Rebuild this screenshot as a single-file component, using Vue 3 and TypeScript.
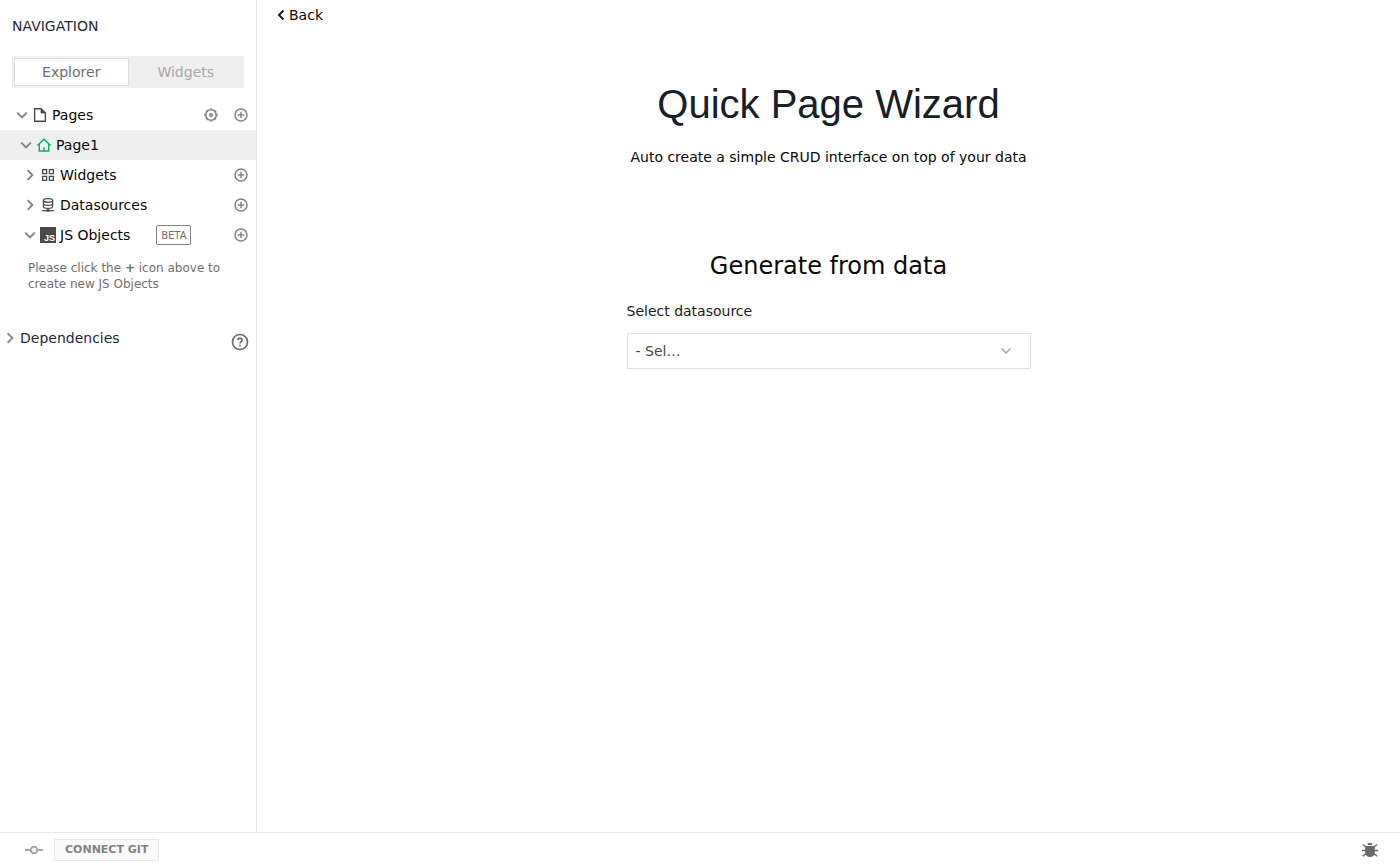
<script setup lang="ts">
import { ref } from 'vue'

type RowKind = 'pages' | 'home' | 'widgets' | 'datasources' | 'js'

interface Row {
  kind: RowKind
  label: string
  level: number
  open: boolean
  active?: boolean
  settings?: boolean
  addable?: boolean
  beta?: boolean
}

const rows: Row[] = [
  { kind: 'pages', label: 'Pages', level: 1, open: true, settings: true, addable: true },
  { kind: 'home', label: 'Page1', level: 2, open: true, active: true },
  { kind: 'widgets', label: 'Widgets', level: 3, open: false, addable: true },
  { kind: 'datasources', label: 'Datasources', level: 3, open: false, addable: true },
  { kind: 'js', label: 'JS Objects', level: 3, open: true, addable: true, beta: true },
]

const tab = ref<'Explorer' | 'Widgets'>('Explorer')
const tabs = ['Explorer', 'Widgets'] as const
const datasource = ref('')
</script>

<template>
  <div class="editor">
    <div class="workspace">
      <aside class="sidebar">
        <h2 class="nav-title">NAVIGATION</h2>
        <div class="tabs" role="tablist">
          <button
            v-for="name in tabs"
            :key="name"
            type="button"
            role="tab"
            class="tab"
            :class="{ selected: tab === name }"
            :aria-selected="tab === name"
            @click="tab = name"
          >{{ name }}</button>
        </div>

        <ul class="tree">
          <li
            v-for="row in rows"
            :key="row.label"
            class="row"
            :class="['level-' + row.level, { active: row.active }]"
          >
            <button type="button" class="toggle" :aria-expanded="row.open">
              <svg class="chevron" viewBox="0 0 16 16" aria-hidden="true">
                <path v-if="row.open" d="M3.2 5.6 8 10.4 12.8 5.6" />
                <path v-else d="M5.6 3.2 10.4 8 5.6 12.8" />
              </svg>
              <svg class="glyph" viewBox="0 0 16 16" aria-hidden="true">
                <template v-if="row.kind === 'pages'">
                  <path d="M2.6 1.8H9L13.4 6V14.2H2.6Z" fill="none" stroke="#4b4848" stroke-width="1.4" />
                  <path d="M9 1.8V6H13.4Z" fill="#4b4848" stroke="#4b4848" stroke-width="0.8" />
                </template>
                <g v-else-if="row.kind === 'home'" fill="none" stroke="#03b365" stroke-width="1.4">
                  <path d="M1.4 8.4 8 2.2 14.6 8.4" />
                  <path d="M3.3 7V14H12.7V7" />
                  <path d="M8 10.2V14" />
                </g>
                <g v-else-if="row.kind === 'widgets'" fill="none" stroke="#4b4848" stroke-width="1.3">
                  <rect x="2.6" y="2.6" width="4" height="4" />
                  <rect x="9.4" y="2.6" width="4" height="4" />
                  <rect x="2.6" y="9.4" width="4" height="4" />
                  <rect x="9.4" y="9.4" width="4" height="4" />
                </g>
                <g v-else-if="row.kind === 'datasources'" fill="none" stroke="#4b4848" stroke-width="1.2">
                  <ellipse cx="8" cy="3.4" rx="4.6" ry="1.8" />
                  <path d="M3.4 3.4V9.4C3.4 10.6 5.3 11.3 8 11.3S12.6 10.6 12.6 9.4V3.4" />
                  <path d="M3.4 6.4C3.4 7.6 5.3 8.3 8 8.3S12.6 7.6 12.6 6.4" />
                  <path d="M8 11.3V13M2 13.6H14" />
                  <path d="M6.5 13.6H9.5" stroke-width="2.2" />
                </g>
                <template v-else>
                  <rect width="16" height="16" fill="#4b4848" />
                  <text x="4" y="14" class="js-mark">JS</text>
                </template>
              </svg>
              <span class="label">{{ row.label }}</span>
            </button>
            <span v-if="row.beta" class="beta">BETA</span>
            <span class="actions">
              <button v-if="row.settings" type="button" class="icon-button" aria-label="Page settings">
                <svg viewBox="1 1 14 14" class="line-icon" aria-hidden="true">
                  <circle cx="8" cy="8" r="5.2" />
                  <path d="M6.6 2H9.4M6.6 14H9.4M2 6.6V9.4M14 6.6V9.4M2.8 4.8 4.8 2.8M11.2 2.8 13.2 4.8M13.2 11.2 11.2 13.2M4.8 13.2 2.8 11.2" stroke-width="1.2" />
                  <circle cx="8" cy="8" r="1.3" />
                </svg>
              </button>
              <button v-if="row.addable" type="button" class="icon-button" :aria-label="'Add to ' + row.label">
                <svg viewBox="1 1 14 14" class="line-icon" aria-hidden="true">
                  <circle cx="8" cy="8" r="6" />
                  <path d="M8 4.8V11.2M4.8 8H11.2" />
                </svg>
              </button>
            </span>
          </li>
        </ul>
        <p class="hint">Please click the <strong>+</strong> icon above to create new JS Objects</p>

        <div class="dependencies">
          <button type="button" class="toggle">
            <svg class="chevron" viewBox="0 0 16 16" aria-hidden="true">
              <path d="M5.6 3.2 10.4 8 5.6 12.8" />
            </svg>
            <span>Dependencies</span>
          </button>
          <button type="button" class="help" aria-label="Help">
            <svg viewBox="0 0 18 18" aria-hidden="true">
              <circle cx="9" cy="9" r="7.5" />
              <path d="M6.9 7.2C6.9 4.4 11.1 4.5 11.1 7C11.1 8.6 9 8.7 9 10.5M9 11.7V13.2" />
            </svg>
          </button>
        </div>
      </aside>

      <main class="content">
        <a href="#" class="back">
          <svg viewBox="0 0 8 12" aria-hidden="true"><path d="M6.5 1.5 2 6 6.5 10.5" /></svg>
          <span>Back</span>
        </a>
        <h1 class="title">Quick Page Wizard</h1>
        <p class="subtitle">Auto create a simple CRUD interface on top of your data</p>
        <section class="generate">
          <h2 class="section-title">Generate from data</h2>
          <label for="datasource" class="field-label">Select datasource</label>
          <div class="select-box">
            <select id="datasource" v-model="datasource">
              <option value="">- Sel…</option>
            </select>
            <svg viewBox="0 0 12 12" aria-hidden="true"><path d="M1.5 3.5 6 8 10.5 3.5" /></svg>
          </div>
        </section>
      </main>
    </div>

    <footer class="status-bar">
      <svg class="commit" viewBox="0 0 18 10" aria-hidden="true">
        <path d="M0 5H5.5M12.5 5H18" />
        <circle cx="9" cy="5" r="3.3" />
      </svg>
      <button type="button" class="connect">CONNECT GIT</button>
      <button type="button" class="debug" aria-label="Debugger">
        <svg viewBox="0 0 16 16" aria-hidden="true">
          <path d="M5.6 3A2.4 2.2 0 0 1 10.4 3Z" />
          <path d="M3.2 4H12.8V10.5C12.8 13 10.8 15 8 15S3.2 13 3.2 10.5Z" />
          <path class="legs" d="M.9 2.5 4 5M15.1 2.5 12 5M0 8.5H4M16 8.5H12M1 14.2 4.3 11.5M15 14.2 11.7 11.5" />
        </svg>
      </button>
    </footer>
  </div>
</template>

<style>
body {
  margin: 0;
  background: #fff;
}
</style>

<style scoped>
.editor {
  display: flex;
  flex-direction: column;
  min-height: 100vh;
  color: #090707;
  font-family: "DejaVu Sans", sans-serif;
  font-size: 14px;
  line-height: 18px;
}
.editor * {
  box-sizing: border-box;
}
button {
  margin: 0;
  padding: 0;
  border: 0;
  background: none;
  color: inherit;
  font: inherit;
  cursor: pointer;
}
svg {
  display: block;
  flex: none;
}
h1,
h2,
p,
ul {
  margin: 0;
  padding: 0;
  font-weight: 400;
}
.workspace {
  display: flex;
  flex: 1;
}
.sidebar {
  flex: 0 0 257px;
  border-right: 1px solid #e8e8e8;
}
.nav-title {
  padding: 17px 12px 21px;
  color: #1f2937;
  font-size: 14px;
  line-height: 18px;
}
.tabs {
  display: grid;
  grid-template-columns: 1fr 1fr;
  margin: 0 12px 12px;
  padding: 2px 1px 2px 2px;
  background: #efefef;
}
.tab {
  height: 28px;
  border: 1px solid transparent;
  color: #a9a7a7;
}
.tab.selected {
  border-color: #e0dede;
  color: #716e6e;
  background: #fff;
}
.tree {
  list-style: none;
}
.row {
  display: flex;
  align-items: center;
  height: 30px;
  padding-right: 8px;
}
.row.active {
  background: #efefef;
}
.level-1 {
  padding-left: 14px;
}
.level-2 {
  padding-left: 18px;
}
.level-3 {
  padding-left: 22px;
}
.toggle {
  display: flex;
  align-items: center;
}
.chevron {
  width: 16px;
  height: 16px;
  fill: none;
  stroke: #858282;
  stroke-width: 1.8;
}
.glyph {
  width: 16px;
  height: 16px;
  margin: 0 4px 0 2px;
}
.js-mark {
  fill: #fff;
  font-family: "Liberation Sans", Arial, sans-serif;
  font-size: 9px;
  font-weight: 700;
}
.beta {
  min-width: 35px;
  height: 20px;
  margin-left: 26px;
  border: 1px solid #858282;
  border-radius: 2px;
  color: #716e6e;
  font-size: 10px;
  line-height: 20px;
  text-align: center;
}
.actions {
  display: flex;
  gap: 16px;
  margin-left: auto;
}
.icon-button svg {
  width: 14px;
  height: 14px;
}
.line-icon {
  fill: none;
  stroke: #858282;
  stroke-width: 1.5;
}
.hint {
  padding: 10px 28px 0;
  color: #716e6e;
  font-size: 12px;
  line-height: 16px;
}
.dependencies {
  display: flex;
  align-items: flex-start;
  justify-content: space-between;
  margin-top: 37px;
  padding: 0 7px 0 2px;
  color: #1f2937;
}
.dependencies .toggle {
  gap: 2px;
}
.help {
  margin-top: 4px;
}
.help svg {
  width: 18px;
  height: 18px;
  fill: none;
  stroke: #716e6e;
  stroke-width: 1.7;
}
.content {
  display: flex;
  flex: 1;
  flex-direction: column;
  align-items: center;
}
.back {
  display: flex;
  align-items: center;
  align-self: flex-start;
  gap: 4px;
  padding: 6px 20px;
  color: #090707;
  text-decoration: none;
}
.back svg {
  width: 8px;
  height: 12px;
  fill: none;
  stroke: #182026;
  stroke-width: 2;
}
.title {
  margin-top: 50px;
  color: #182026;
  font-family: "Liberation Sans", Arial, sans-serif;
  font-size: 40px;
  line-height: 48px;
}
.subtitle {
  margin-top: 20px;
}
.generate {
  display: flex;
  flex-direction: column;
  width: 404px;
  max-width: 100%;
  margin-top: 84px;
}
.section-title {
  font-size: 24px;
  line-height: 32px;
  text-align: center;
}
.field-label {
  margin-top: 20px;
  color: #182026;
}
.select-box {
  display: grid;
  align-items: center;
  margin-top: 13px;
}
.select-box > * {
  grid-area: 1 / 1;
}
.select-box select {
  width: 100%;
  height: 36px;
  margin: 0;
  padding: 0 8px;
  border: 1px solid #e0dede;
  border-radius: 0;
  color: #4b4848;
  background: #fff;
  font: inherit;
  appearance: none;
}
.select-box svg {
  justify-self: end;
  width: 12px;
  height: 12px;
  margin-right: 19px;
  fill: none;
  stroke: #a9a7a7;
  stroke-width: 1.5;
  pointer-events: none;
}
.status-bar {
  display: flex;
  align-items: center;
  height: 34px;
  padding: 0 22px 0 25px;
  border-top: 1px solid #e8e8e8;
}
.commit {
  width: 18px;
  height: 10px;
  fill: none;
  stroke: #a9a7a7;
  stroke-width: 2;
}
.connect {
  height: 22px;
  margin-left: 11px;
  padding: 0 10px;
  border: 1px solid #e7e7e7;
  color: #858282;
  background: #fafafa;
  font-size: 11px;
  font-weight: 700;
  line-height: 18px;
}
.debug {
  margin-left: auto;
}
.debug svg {
  width: 16px;
  height: 16px;
  fill: #6a6767;
}
.debug .legs {
  fill: none;
  stroke: #6a6767;
  stroke-width: 1.5;
}
</style>
